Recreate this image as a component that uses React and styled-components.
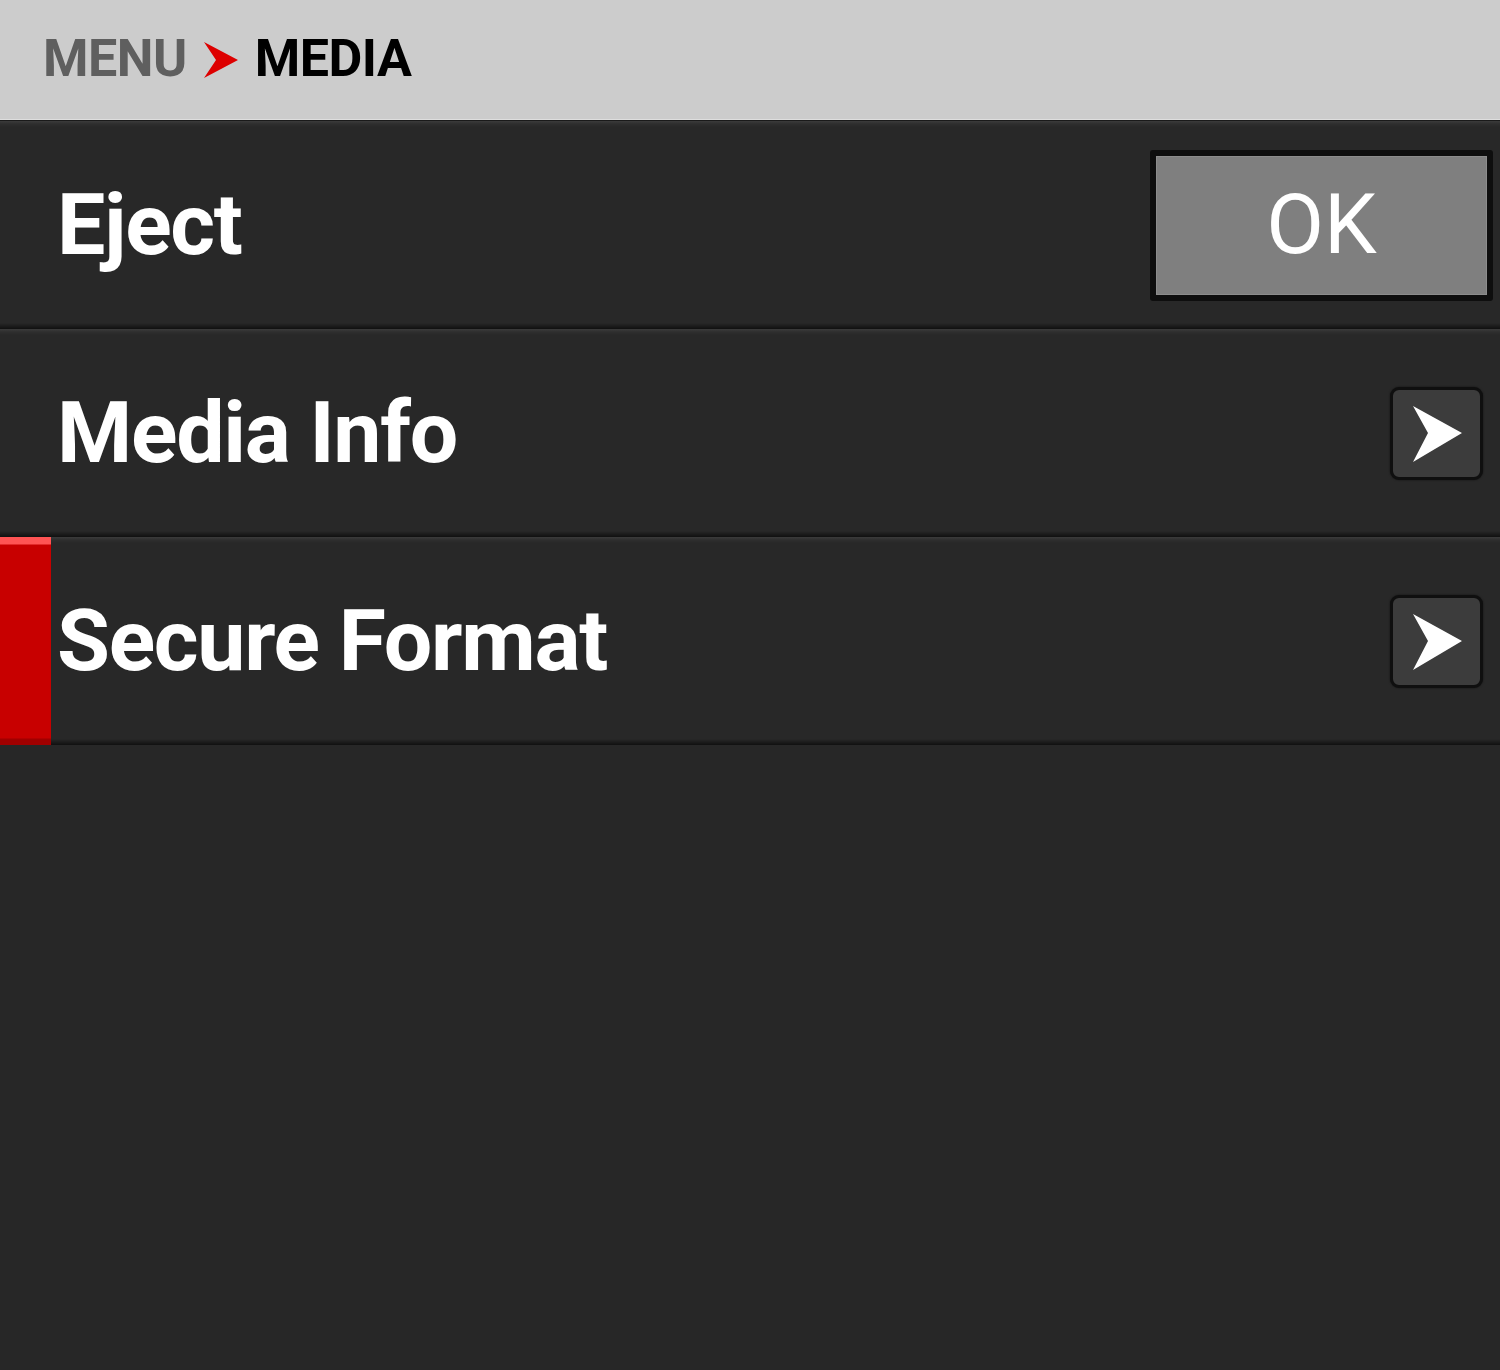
import styled, { createGlobalStyle } from "styled-components";

const Global = createGlobalStyle`
  html, body {
    margin: 0;
    padding: 0;
    background: #282828;
  }
  body {
    font-family: Roboto, "Liberation Sans", sans-serif;
  }
`;

const Screen = styled.div`
  width: 1500px;
  height: 1370px;
  background: #272727;
  display: flex;
  flex-direction: column;
  overflow: hidden;
`;

const Header = styled.div`
  height: 121px;
  flex-shrink: 0;
  background: #cccccc;
  border-bottom: 1px solid #1a1a1a;
  box-shadow: inset 0 -1px 0 #dedede;
  display: flex;
  align-items: center;
  padding-left: 43px;
  box-sizing: border-box;
  gap: 17px;
`;

const Crumb = styled.span`
  font-size: 52px;
  font-weight: 700;
  letter-spacing: -0.5px;
  color: ${(p) => (p.$current ? "#000000" : "#5f5f5f")};
  line-height: 1;
  padding-bottom: 2px;
`;

const Row = styled.div`
  height: 208px;
  flex-shrink: 0;
  position: relative;
  display: flex;
  align-items: center;
  justify-content: space-between;
  padding-left: 57px;
  box-sizing: border-box;
  background: linear-gradient(
    to bottom,
    #3b3b3b 0px,
    #2e2e2e 3px,
    #282828 6px,
    #282828 calc(100% - 6px),
    #1c1c1c calc(100% - 3px),
    #101010 100%
  );
`;

const Marker = styled.div`
  position: absolute;
  left: 0;
  top: 0;
  bottom: 0;
  width: 51px;
  background: linear-gradient(
    to bottom,
    #ff5454 0px,
    #ff5454 7px,
    #c80000 8px,
    #c80000 calc(100% - 7px),
    #a00000 calc(100% - 6px),
    #a00000 100%
  );
`;

const Label = styled.span`
  font-size: 86px;
  font-weight: 700;
  color: #ffffff;
  letter-spacing: -1.3px;
  line-height: 1;
  position: relative;
`;

const OkButton = styled.div`
  width: 343px;
  height: 151px;
  margin-right: 7px;
  box-sizing: border-box;
  border: 6px solid #0e0e0e;
  border-radius: 3px;
  background: #7f7f7f;
  box-shadow: inset 0 0 0 1px #8c8c8c;
  display: flex;
  align-items: center;
  justify-content: center;
  color: #ffffff;
  font-size: 84px;
  font-weight: 400;
  line-height: 1;
`;

const ArrowButton = styled.div`
  width: 93px;
  height: 93px;
  margin-right: 17px;
  box-sizing: border-box;
  border: 3px solid #0f0f0f;
  border-radius: 9px;
  background: #3c3c3c;
  box-shadow: 0 0 2px rgba(0, 0, 0, 0.6);
  display: flex;
  align-items: center;
  justify-content: center;
`;

const ChevronRight = () => (
  <svg width="93" height="93" viewBox="0 0 93 93" style={{ display: "block", margin: -3 }}>
    <polygon points="23,19 72,46 23,75 38,46" fill="#ffffff" />
  </svg>
);

const CrumbArrow = () => (
  <svg width="34" height="36" viewBox="0 0 34 36">
    <polygon points="0,0 34,18 0,36 12,18" fill="#dd0000" />
  </svg>
);

export default function App() {
  return (
    <>
      <Global />
      <Screen>
        <Header>
          <Crumb>MENU</Crumb>
          <CrumbArrow />
          <Crumb $current>MEDIA</Crumb>
        </Header>
        <Row>
          <Label>Eject</Label>
          <OkButton>OK</OkButton>
        </Row>
        <Row>
          <Label>Media Info</Label>
          <ArrowButton>
            <ChevronRight />
          </ArrowButton>
        </Row>
        <Row>
          <Marker />
          <Label>Secure Format</Label>
          <ArrowButton>
            <ChevronRight />
          </ArrowButton>
        </Row>
      </Screen>
    </>
  );
}
